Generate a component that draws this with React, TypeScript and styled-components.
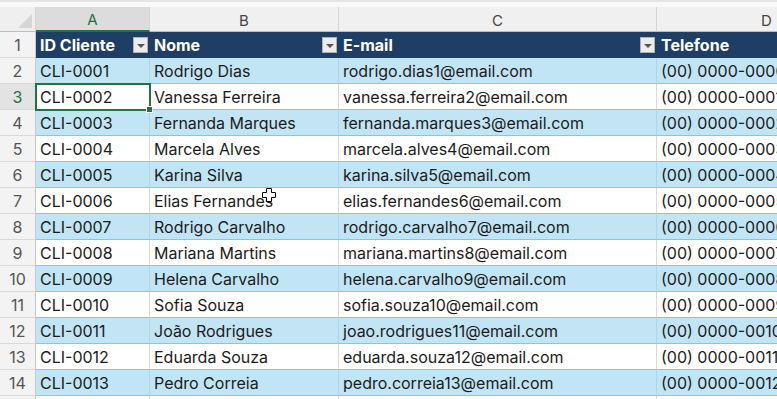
import React from 'react'
import styled, { createGlobalStyle } from 'styled-components'

const GlobalStyle = createGlobalStyle`
  html, body {
    margin: 0;
    padding: 0;
    background: #ffffff;
    overflow: hidden;
  }
  body {
    font-family: Inter, "Noto Sans", "Liberation Sans", sans-serif;
  }
`

const COLS = '36px 114px 189px 318px 220px'

const clients = [
  ['Rodrigo Dias', 'rodrigo.dias1@email.com'],
  ['Vanessa Ferreira', 'vanessa.ferreira2@email.com'],
  ['Fernanda Marques', 'fernanda.marques3@email.com'],
  ['Marcela Alves', 'marcela.alves4@email.com'],
  ['Karina Silva', 'karina.silva5@email.com'],
  ['Elias Fernandes', 'elias.fernandes6@email.com'],
  ['Rodrigo Carvalho', 'rodrigo.carvalho7@email.com'],
  ['Mariana Martins', 'mariana.martins8@email.com'],
  ['Helena Carvalho', 'helena.carvalho9@email.com'],
  ['Sofia Souza', 'sofia.souza10@email.com'],
  ['João Rodrigues', 'joao.rodrigues11@email.com'],
  ['Eduarda Souza', 'eduarda.souza12@email.com'],
  ['Pedro Correia', 'pedro.correia13@email.com'],
]

const Sheet = styled.div`
  position: relative;
  width: 777px;
  height: 399px;
  overflow: hidden;
  background: #ffffff;
`

const TopStrip = styled.div`
  height: 7px;
  background: linear-gradient(#e4e4e4 0 2px, #f9f9f9 2px);
`

const Row = styled.div<{ $height: number }>`
  display: grid;
  grid-template-columns: ${COLS};
  height: ${(p) => p.$height}px;
`

const Corner = styled.div`
  position: relative;
  background: #efefef;
  border-right: 1px solid #d4d4d4;
  border-bottom: 1px solid #bdbdbd;
  &::after {
    content: '';
    position: absolute;
    right: 3px;
    bottom: 3px;
    width: 0;
    height: 0;
    border-left: 14px solid transparent;
    border-bottom: 14px solid #d6d6d6;
  }
`

const ColHead = styled.div<{ $selected?: boolean }>`
  display: flex;
  align-items: center;
  justify-content: center;
  font-size: 15px;
  color: ${(p) => (p.$selected ? '#1e7145' : '#444444')};
  background: ${(p) => (p.$selected ? '#dcdcdc' : '#f0f0f0')};
  border-right: 1px solid #d4d4d4;
  border-bottom: ${(p) => (p.$selected ? '2px solid #217346' : '1px solid #bdbdbd')};
  box-sizing: border-box;
  padding-top: 2px;
`

const RowHead = styled.div<{ $selected?: boolean }>`
  display: flex;
  align-items: center;
  justify-content: center;
  font-size: 16px;
  color: ${(p) => (p.$selected ? '#1e7145' : '#555555')};
  background: ${(p) => (p.$selected ? '#e3e3e3' : '#f3f3f3')};
  border-right: 1px solid #c8c8c8;
  border-bottom: 1px solid #d9d9d9;
  box-sizing: border-box;
`

const TitleCell = styled.div`
  display: flex;
  align-items: center;
  justify-content: space-between;
  padding: 0 2px 0 4px;
  background: #1f3e66;
  color: #ffffff;
  font-weight: 700;
  font-size: 16px;
  white-space: nowrap;
  overflow: hidden;
`

const FilterButton = styled.span`
  flex: none;
  width: 15px;
  height: 16px;
  box-sizing: border-box;
  background: #ececec;
  border: 1px solid #b0b0b0;
  display: flex;
  align-items: center;
  justify-content: center;
  &::before {
    content: '';
    border-left: 4px solid transparent;
    border-right: 4px solid transparent;
    border-top: 4px solid #555555;
    margin-top: 2px;
  }
`

const Cell = styled.div<{ $band: boolean }>`
  display: flex;
  align-items: center;
  padding: 0 4px;
  font-size: 16px;
  color: #1b1b1b;
  white-space: nowrap;
  overflow: hidden;
  background: ${(p) => (p.$band ? '#c1e5f5' : '#ffffff')};
  border-right: 1px solid ${(p) => (p.$band ? '#a9d6ec' : '#d9d9d9')};
  border-bottom: 1px solid #82c6e8;
  box-sizing: border-box;
`

const Selection = styled.div`
  position: absolute;
  left: 35px;
  top: 83px;
  width: 116px;
  height: 28px;
  box-sizing: border-box;
  border: 2px solid #217346;
  pointer-events: none;
  &::after {
    content: '';
    position: absolute;
    right: -4px;
    bottom: -4px;
    width: 5px;
    height: 5px;
    background: #217346;
    border: 1px solid #ffffff;
  }
`

const Pointer = styled.svg`
  position: absolute;
  left: 261px;
  top: 187px;
`

const headers = ['ID Cliente', 'Nome', 'E-mail', 'Telefone']

export default function App() {
  return (
    <>
      <GlobalStyle />
      <Sheet>
        <TopStrip />
        <Row $height={25}>
          <Corner />
          <ColHead $selected>A</ColHead>
          <ColHead>B</ColHead>
          <ColHead>C</ColHead>
          <ColHead>D</ColHead>
        </Row>
        <Row $height={26}>
          <RowHead>1</RowHead>
          {headers.map((h) => (
            <TitleCell key={h}>
              {h}
              <FilterButton />
            </TitleCell>
          ))}
        </Row>
        {clients.map(([name, email], i) => {
          const band = i % 2 === 0
          const n = String(i + 1).padStart(4, '0')
          const phone = '(00) 0000-' + String(i).padStart(4, '0')
          return (
            <Row $height={26} key={n}>
              <RowHead $selected={i === 1}>{i + 2}</RowHead>
              <Cell $band={band}>CLI-{n}</Cell>
              <Cell $band={band}>{name}</Cell>
              <Cell $band={band}>{email}</Cell>
              <Cell $band={band}>{phone}</Cell>
            </Row>
          )
        })}
        <Row $height={26}>
          <RowHead />
          <Cell $band={false} />
          <Cell $band={false} />
          <Cell $band={false} />
          <Cell $band={false} />
        </Row>
        <Selection />
        <Pointer width="16" height="16" viewBox="0 0 16 16">
          <path
            d="M5.5 1.5h5v4h4v5h-4v4h-5v-4h-4v-5h4z"
            fill="#ffffff"
            stroke="#000000"
            strokeWidth="1"
          />
        </Pointer>
      </Sheet>
    </>
  )
}
